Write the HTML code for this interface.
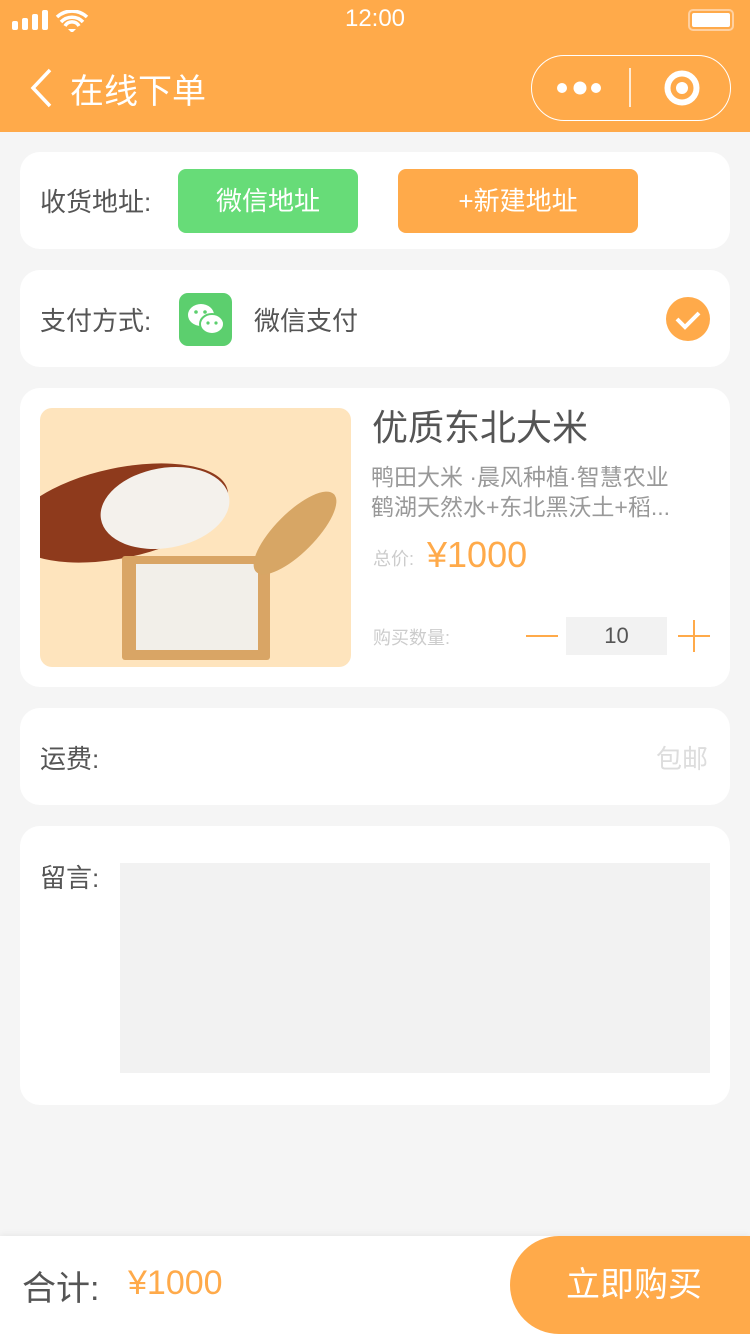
<!DOCTYPE html><html><head><meta charset="utf-8"><style>
*{margin:0;padding:0;box-sizing:border-box}
body{width:750px;height:1334px;background:#f5f5f5;font-family:"Liberation Sans","Noto Sans CJK SC",sans-serif;position:relative;overflow:hidden;color:#555}
.card{position:absolute;left:20px;width:710px;background:#fff;border-radius:20px}
.abs{position:absolute}
</style></head><body>
<div class="abs" style="left:0;top:0;width:750px;height:132px;background:#ffaa4a"></div>
<svg class="abs" style="left:12px;top:10px" width="80" height="22"><rect x="0" y="11" width="6" height="9" rx="2" fill="#fff"/><rect x="10" y="8" width="6" height="12" rx="2" fill="#fff"/><rect x="20" y="4" width="6" height="16" rx="2" fill="#fff"/><rect x="30" y="0" width="6" height="20" rx="2" fill="#fff"/><path d="M45 7a22 22 0 0 1 30 0M49 12a15 15 0 0 1 22 0M53 16a8 8 0 0 1 14 0" stroke="#fff" stroke-width="3.5" fill="none"/><path d="M56 19l4 4 4-4z" fill="#fff"/></svg>
<div class="abs" style="left:0;width:750px;top:5px;text-align:center;color:#fff;font-size:24px">12:00</div>
<div class="abs" style="left:688px;top:9px;width:46px;height:22px;border:2px solid #ffd0a0;border-radius:5px"><div style="margin:2px;height:14px;background:#fff;border-radius:2px"></div></div>
<svg class="abs" style="left:28px;top:68px" width="26" height="40"><path d="M22 2L5 20l17 18" stroke="#fff" stroke-width="3.5" fill="none"/></svg>
<div class="abs" style="left:70px;top:64px;color:#fff;font-size:34px">在线下单</div>
<div class="abs" style="left:531px;top:55px;width:200px;height:66px;border:1.5px solid #fff;border-radius:33px"></div>
<svg class="abs" style="left:555px;top:60px" width="160" height="56"><circle cx="7" cy="28" r="5" fill="#fff"/><circle cx="25" cy="28" r="6.5" fill="#fff"/><circle cx="41" cy="28" r="5" fill="#fff"/><line x1="75" y1="8" x2="75" y2="47" stroke="#fff" stroke-width="1.5"/><circle cx="127" cy="28" r="14.5" stroke="#fff" stroke-width="6" fill="none"/><circle cx="127" cy="28" r="6" fill="#fff"/></svg>

<div class="card" style="top:152px;height:97px"></div>
<div class="abs" style="left:40px;top:182px;font-size:26px">收货地址:</div>
<div class="abs" style="left:178px;top:169px;width:180px;height:64px;background:#67dc78;border-radius:8px;color:#fff;font-size:26px;line-height:64px;text-align:center">微信地址</div>
<div class="abs" style="left:398px;top:169px;width:240px;height:64px;background:#ffaa4a;border-radius:8px;color:#fff;font-size:26px;line-height:64px;text-align:center">+新建地址</div>

<div class="card" style="top:270px;height:97px"></div>
<div class="abs" style="left:40px;top:301px;font-size:26px">支付方式:</div>
<div class="abs" style="left:179px;top:293px;width:53px;height:53px;background:#5ccf6e;border-radius:9px"></div>
<svg class="abs" style="left:179px;top:293px" width="53" height="53"><ellipse cx="22" cy="22" rx="13" ry="11" fill="#fff"/><ellipse cx="33" cy="31" rx="12" ry="10" fill="#fff" stroke="#5ccf6e" stroke-width="2"/><circle cx="17" cy="19" r="1.8" fill="#5ccf6e"/><circle cx="26" cy="19" r="1.8" fill="#5ccf6e"/><circle cx="29" cy="30" r="1.6" fill="#5ccf6e"/><circle cx="37" cy="30" r="1.6" fill="#5ccf6e"/></svg>
<div class="abs" style="left:254px;top:301px;font-size:26px">微信支付</div>
<svg class="abs" style="left:666px;top:297px" width="44" height="44"><circle cx="22" cy="22" r="22" fill="#ffaa4a"/><path d="M11 22l8 8 14-14" stroke="#fff" stroke-width="4" fill="none"/></svg>

<div class="card" style="top:388px;height:299px"></div>
<div class="abs" style="left:40px;top:408px;width:311px;height:259px;background:#fee4bd;border-radius:12px;overflow:hidden">
<div class="abs" style="left:-30px;top:60px;width:220px;height:90px;background:#8e3a1c;border-radius:50%;transform:rotate(-12deg)"></div>
<div class="abs" style="left:60px;top:60px;width:130px;height:80px;background:#f4f1ec;border-radius:50%;transform:rotate(-10deg)"></div>
<div class="abs" style="left:82px;top:148px;width:148px;height:104px;background:#d9a565;border-radius:3px"></div>
<div class="abs" style="left:96px;top:156px;width:122px;height:86px;background:#f2efe9"></div>
<div class="abs" style="left:235px;top:70px;width:40px;height:110px;background:#d7a665;border-radius:50%;transform:rotate(45deg)"></div>
</div>
<div class="abs" style="left:372px;top:399px;font-size:36px;color:#555">优质东北大米</div>
<div class="abs" style="left:371px;top:462px;font-size:23px;color:#999;line-height:30px">鸭田大米 ·晨风种植·智慧农业<br>鹤湖天然水+东北黑沃土+稻...</div>
<div class="abs" style="left:373px;top:545px;font-size:18px;color:#ccc">总价:</div>
<div class="abs" style="left:427px;top:534px;font-size:36px;color:#ffaa4a">¥1000</div>
<div class="abs" style="left:373px;top:624px;font-size:18px;color:#ccc">购买数量:</div>
<div class="abs" style="left:526px;top:635px;width:32px;height:2px;background:#ffaa4a"></div>
<div class="abs" style="left:566px;top:617px;width:101px;height:38px;background:#f2f2f2;text-align:center;line-height:38px;font-size:22px;color:#555">10</div>
<div class="abs" style="left:678px;top:635px;width:32px;height:2px;background:#ffaa4a"></div>
<div class="abs" style="left:693px;top:620px;width:2px;height:32px;background:#ffaa4a"></div>

<div class="card" style="top:708px;height:97px"></div>
<div class="abs" style="left:40px;top:739px;font-size:26px">运费:</div>
<div class="abs" style="left:656px;top:739px;font-size:26px;color:#ddd">包邮</div>

<div class="card" style="top:826px;height:279px"></div>
<div class="abs" style="left:40px;top:858px;font-size:26px">留言:</div>
<div class="abs" style="left:120px;top:863px;width:590px;height:210px;background:#f2f2f2"></div>

<div class="abs" style="left:0;top:1236px;width:750px;height:98px;background:#fff;box-shadow:0 -2px 6px rgba(0,0,0,.05)"></div>
<div class="abs" style="left:22px;top:1261px;font-size:34px;color:#555">合计:</div>
<div class="abs" style="left:128px;top:1264px;font-size:34px;color:#ffaa4a">¥1000</div>
<div class="abs" style="left:510px;top:1236px;width:260px;height:98px;background:#ffaa4a;border-radius:49px 0 0 49px;color:#fff;font-size:34px;line-height:98px;padding-left:56px">立即购买</div>
</body></html>
